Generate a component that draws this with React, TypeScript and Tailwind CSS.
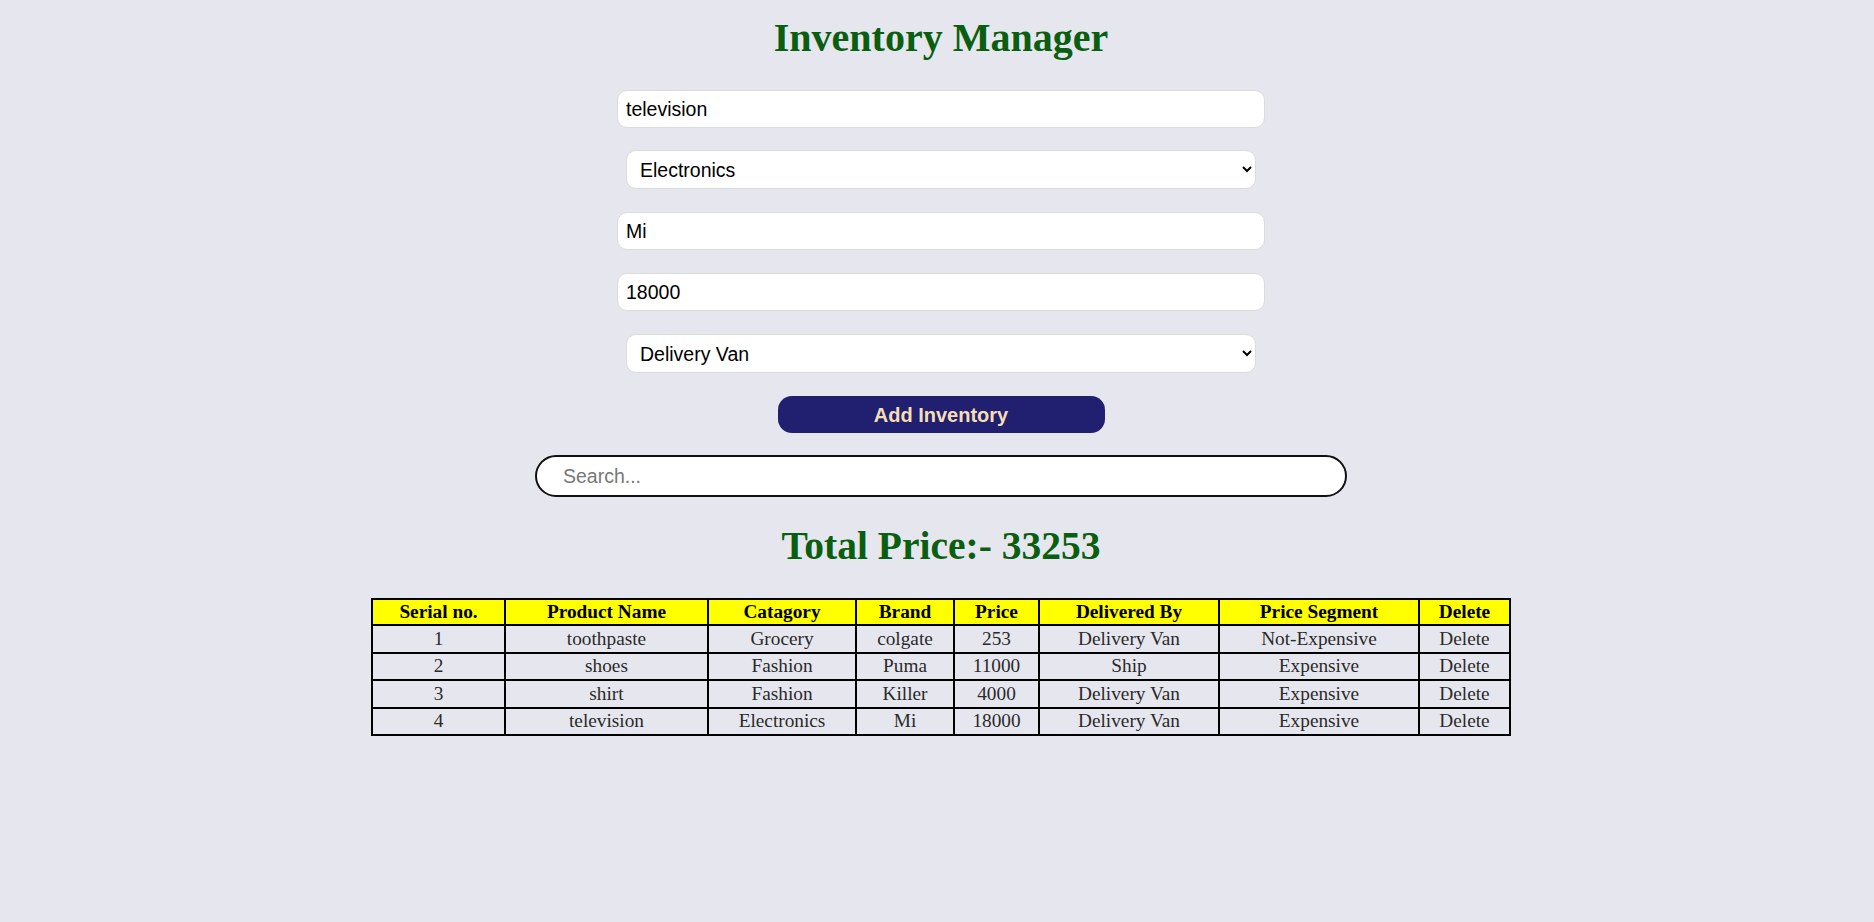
import React from "react";

const rows = [
  ["1", "toothpaste", "Grocery", "colgate", "253", "Delivery Van", "Not-Expensive", "Delete"],
  ["2", "shoes", "Fashion", "Puma", "11000", "Ship", "Expensive", "Delete"],
  ["3", "shirt", "Fashion", "Killer", "4000", "Delivery Van", "Expensive", "Delete"],
  ["4", "television", "Electronics", "Mi", "18000", "Delivery Van", "Expensive", "Delete"],
];

const headers = ["Serial no.", "Product Name", "Catagory", "Brand", "Price", "Delivered By", "Price Segment", "Delete"];
const widths = [133, 203, 148, 98, 85, 180, 200, 91];

export default function App() {
  return (
    <div className="min-h-[922px] w-full bg-[#e6e6ee] pl-[8px] pt-[15px] flex flex-col items-center">
      <h1 className="font-['Liberation_Serif',serif] font-bold text-[40px] leading-[46px] text-[#0a5e10]">
        Inventory Manager
      </h1>
      <input
        defaultValue="television"
        className="mt-[29px] w-[648px] h-[38px] bg-white border border-[#dcdcdc] rounded-[10px] px-[8px] text-[19.5px] text-black font-['Liberation_Sans',Arial,sans-serif] outline-none"
      />
      <select
        defaultValue="Electronics"
        className="mt-[22px] w-[630px] h-[39px] bg-white border border-[#dcdcdc] rounded-[10px] pl-[9px] pr-[6px] text-[19.5px] text-black font-['Liberation_Sans',Arial,sans-serif] outline-none"
      >
        <option>Grocery</option>
        <option>Fashion</option>
        <option>Electronics</option>
      </select>
      <input
        defaultValue="Mi"
        className="mt-[23px] w-[648px] h-[38px] bg-white border border-[#dcdcdc] rounded-[10px] px-[8px] text-[19.5px] text-black font-['Liberation_Sans',Arial,sans-serif] outline-none"
      />
      <input
        defaultValue="18000"
        className="mt-[23px] w-[648px] h-[38px] bg-white border border-[#dcdcdc] rounded-[10px] px-[8px] text-[19.5px] text-black font-['Liberation_Sans',Arial,sans-serif] outline-none"
      />
      <select
        defaultValue="Delivery Van"
        className="mt-[23px] w-[630px] h-[39px] bg-white border border-[#dcdcdc] rounded-[10px] pl-[9px] pr-[6px] text-[19.5px] text-black font-['Liberation_Sans',Arial,sans-serif] outline-none"
      >
        <option>Delivery Van</option>
        <option>Ship</option>
        <option>Airplane</option>
      </select>
      <button className="mt-[23px] w-[327px] h-[37px] rounded-[14px] bg-[#201f70] text-[#f5deb3] font-bold text-[20px] font-['Liberation_Sans',Arial,sans-serif]">
        Add Inventory
      </button>
      <input
        placeholder="Search..."
        className="mt-[22px] w-[812px] h-[42px] bg-white border-2 border-[#111] rounded-full pl-[26px] text-[19.5px] text-black placeholder:text-[#777] font-['Liberation_Sans',Arial,sans-serif] outline-none"
      />
      <h2 className="mt-[26px] font-['Liberation_Serif',serif] font-bold text-[39.5px] leading-[46px] text-[#0a5e10]">
        Total Price:- 33253
      </h2>
      <table className="mt-[29px] w-[1138px] table-fixed border-collapse border-2 border-black font-['Liberation_Serif',serif] text-[19.3px]">
        <colgroup>
          {widths.map((w, i) => (
            <col key={i} style={{ width: w }} />
          ))}
        </colgroup>
        <thead>
          <tr className="h-[26px] bg-[#ffff00]">
            {headers.map((h) => (
              <th key={h} className="border-2 border-black font-bold text-black text-center leading-[22px] p-0">
                {h}
              </th>
            ))}
          </tr>
        </thead>
        <tbody>
          {rows.map((r) => (
            <tr key={r[0]} className="h-[27.5px]">
              {r.map((c, i) => (
                <td key={i} className="border-2 border-black text-center text-[#2a2a2a] leading-[22px] p-0">
                  {c}
                </td>
              ))}
            </tr>
          ))}
        </tbody>
      </table>
    </div>
  );
}
